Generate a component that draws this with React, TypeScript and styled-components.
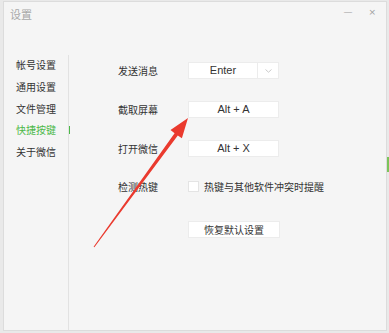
import React from 'react';
import styled, { createGlobalStyle } from 'styled-components';

const GlobalStyle = createGlobalStyle`
  html, body {
    margin: 0;
    padding: 0;
    background: #e9e9e9;
  }
  body {
    font-family: "Noto Sans CJK SC", "Noto Sans", sans-serif;
  }
`;

const menu = ['帐号设置', '通用设置', '文件管理', '快捷按键', '关于微信'];

const App: React.FC = () => {
  return (
    <Page>
      <GlobalStyle />
      <Window>
        <TitleBar>
          <Title>设置</Title>
          <WindowButtons>
            <WinButton>—</WinButton>
            <WinButton>×</WinButton>
          </WindowButtons>
        </TitleBar>
        <Body>
          <Sidebar>
            {menu.map((item) => (
              <MenuItem key={item} $active={item === '快捷按键'}>
                {item}
                {item === '快捷按键' && <ActiveMark />}
              </MenuItem>
            ))}
          </Sidebar>
          <Content>
            <Row $top={7}>
              <Label>发送消息</Label>
              <Select>
                <SelectValue>Enter</SelectValue>
                <SelectArrow>
                  <svg width="7" height="4" viewBox="0 0 7 4">
                    <path d="M0.5 0.5 L3.5 3.2 L6.5 0.5" fill="none" stroke="#c4c4c4" strokeWidth="0.9" />
                  </svg>
                </SelectArrow>
              </Select>
            </Row>
            <Row $top={22}>
              <Label>截取屏幕</Label>
              <KeyBox>Alt + A</KeyBox>
            </Row>
            <Row $top={22}>
              <Label>打开微信</Label>
              <KeyBox>Alt + X</KeyBox>
            </Row>
            <Row $top={21}>
              <Label>检测热键</Label>
              <Checkbox />
              <CheckText>热键与其他软件冲突时提醒</CheckText>
            </Row>
            <Row $top={26}>
              <Label />
              <ResetButton>恢复默认设置</ResetButton>
            </Row>
          </Content>
        </Body>
      </Window>
      <SideStrip />
      <Arrow width="389" height="333" viewBox="0 0 389 333">
        <polygon
          points="93.6,246.7 174.6,133.2 170.5,130.1 188,118 181.9,138.3 177.8,135.4 94.4,247.3"
          fill="#ea3a2e"
        />
      </Arrow>
    </Page>
  );
};

const Page = styled.div`
  position: relative;
  width: 389px;
  height: 333px;
  padding: 1px 2px 2px 3px;
  box-sizing: border-box;
  overflow: hidden;
`;

const Window = styled.div`
  width: 384px;
  height: 330px;
  background: #f5f5f5;
  border: 1px solid #dcdcdc;
  box-sizing: border-box;
  display: flex;
  flex-direction: column;
`;

const TitleBar = styled.div`
  height: 53px;
  display: flex;
  justify-content: space-between;
  align-items: flex-start;
  padding: 4px 10px 0 6px;
  box-sizing: border-box;
`;

const Title = styled.div`
  font-size: 11px;
  line-height: 16px;
  color: #a8a8a8;
`;

const WindowButtons = styled.div`
  display: flex;
  gap: 16px;
`;

const WinButton = styled.div`
  font-family: "DejaVu Sans", sans-serif;
  font-size: 9px;
  line-height: 12px;
  color: #a0a0a0;
`;

const Body = styled.div`
  flex: 1;
  display: flex;
`;

const Sidebar = styled.div`
  width: 65px;
  border-right: 1px solid #e2e2e2;
  box-sizing: border-box;
`;

const MenuItem = styled.div<{ $active?: boolean }>`
  position: relative;
  height: 21.75px;
  line-height: 20px;
  padding-left: 12px;
  font-size: 10px;
  color: ${(p) => (p.$active ? '#4cb848' : '#333333')};
`;

const ActiveMark = styled.span`
  position: absolute;
  right: -2px;
  top: 6px;
  width: 1px;
  height: 8px;
  background: #4cb848;
`;

const Content = styled.div`
  flex: 1;
  padding-left: 49px;
`;

const Row = styled.div<{ $top: number }>`
  display: flex;
  align-items: center;
  height: 17px;
  margin-top: ${(p) => p.$top}px;
`;

const Label = styled.div`
  width: 70px;
  font-size: 10px;
  color: #333333;
`;

const Select = styled.div`
  display: flex;
  width: 91px;
  height: 17px;
  background: #ffffff;
  border: 1px solid #ececec;
  box-sizing: border-box;
`;

const SelectValue = styled.div`
  flex: 1;
  text-align: center;
  font-family: "Liberation Sans", Arial, sans-serif;
  font-size: 11px;
  line-height: 15px;
  color: #333333;
  border-right: 1px solid #ececec;
`;

const SelectArrow = styled.div`
  width: 20px;
  display: flex;
  align-items: center;
  justify-content: center;
`;

const KeyBox = styled.div`
  width: 91px;
  height: 17px;
  background: #ffffff;
  border: 1px solid #ececec;
  box-sizing: border-box;
  text-align: center;
  font-family: "Liberation Sans", Arial, sans-serif;
  font-size: 11px;
  line-height: 15px;
  color: #333333;
`;

const Checkbox = styled.div`
  width: 11px;
  height: 11px;
  background: #ffffff;
  border: 1px solid #e4e4e4;
  box-sizing: border-box;
`;

const CheckText = styled.div`
  margin-left: 5px;
  font-size: 10px;
  color: #333333;
`;

const ResetButton = styled.div`
  width: 92px;
  height: 17px;
  background: #ffffff;
  border: 1px solid #ececec;
  box-sizing: border-box;
  text-align: center;
  font-size: 10px;
  line-height: 15px;
  color: #333333;
`;

const SideStrip = styled.div`
  position: absolute;
  right: 0;
  top: 157px;
  width: 2px;
  height: 15px;
  background: #7bc45a;
`;

const Arrow = styled.svg`
  position: absolute;
  left: 0;
  top: 0;
  pointer-events: none;
`;

export default App;
